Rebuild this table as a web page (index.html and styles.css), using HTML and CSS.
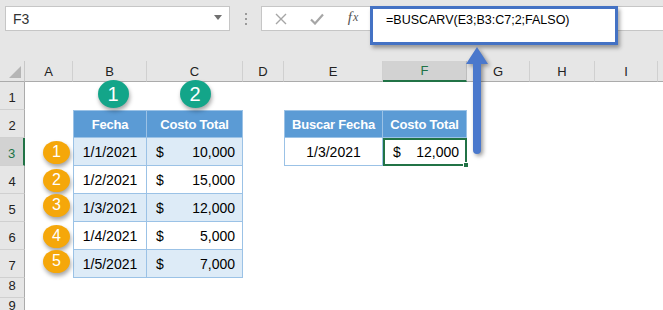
FILE: index.html
```html
<!DOCTYPE html>
<html lang="es">
<head>
<meta charset="utf-8">
<title>BUSCARV</title>
<link rel="stylesheet" href="styles.css">
</head>
<body>
<div class="app">
  <header class="toolbar">
    <div class="namebox"><span class="ref">F3</span><span class="caret"></span></div>
    <div class="grip"><i></i><i></i><i></i></div>
    <div class="fbar">
      <span class="fbtn"><svg width="12" height="12" viewBox="0 0 12 12"><path d="M1 1 L11 11 M11 1 L1 11" stroke="#a6a6a6" stroke-width="1.4" fill="none"/></svg></span>
      <span class="fbtn"><svg width="14" height="12" viewBox="0 0 14 12"><path d="M1 6.5 L5 10.5 L13 1.5" stroke="#a6a6a6" stroke-width="2.2" fill="none"/></svg></span>
      <span class="fbtn fx">f<span class="fx-x">x</span></span>
      <div class="finput"></div>
    </div>
  </header>

  <div class="sheet">
    <div class="corner"><span class="tri"></span></div>
    <div class="ch">A</div>
    <div class="ch">B</div>
    <div class="ch">C</div>
    <div class="ch">D</div>
    <div class="ch">E</div>
    <div class="ch ch-sel">F</div>
    <div class="ch">G</div>
    <div class="ch">H</div>
    <div class="ch">I</div>
    <div class="ch"></div>

    <div class="rh">1</div>
    <div></div>
    <div class="bc bc-b"><span class="badge green">1</span></div>
    <div class="bc"><span class="badge green">2</span></div>

    <div class="rh">2</div>
    <div></div>
    <div class="th th-first">Fecha</div>
    <div class="th">Costo Total</div>
    <div></div>
    <div class="th th-first">Buscar Fecha</div>
    <div class="th">Costo Total</div>

    <div class="rh rh-sel">3</div>
    <div class="bc bc-a"><span class="badge orange">1</span></div>
    <div class="td td-first band">1/1/2021</div>
    <div class="td money band"><span>$</span><span>10,000</span></div>
    <div></div>
    <div class="td td-first plain">1/3/2021</div>
    <div class="td money plain selected"><span>$</span><span>12,000</span><span class="handle"></span></div>

    <div class="rh">4</div>
    <div class="bc bc-a"><span class="badge orange">2</span></div>
    <div class="td td-first">1/2/2021</div>
    <div class="td money"><span>$</span><span>15,000</span></div>

    <div class="rh">5</div>
    <div class="bc bc-a up"><span class="badge orange">3</span></div>
    <div class="td td-first band">1/3/2021</div>
    <div class="td money band"><span>$</span><span>12,000</span></div>

    <div class="rh">6</div>
    <div class="bc bc-a"><span class="badge orange">4</span></div>
    <div class="td td-first">1/4/2021</div>
    <div class="td money"><span>$</span><span>5,000</span></div>

    <div class="rh">7</div>
    <div class="bc bc-a up"><span class="badge orange">5</span></div>
    <div class="td td-first band">1/5/2021</div>
    <div class="td money band"><span>$</span><span>7,000</span></div>

    <div class="rh">8</div>
    <div class="rh">9</div>
  </div>

  <div class="callout">=BUSCARV(E3;B3:C7;2;FALSO)</div>
  <svg class="arrow" width="34" height="122" viewBox="0 0 34 122">
    <path d="M17 7 L28 24 L21 24 L21 110 A4 4 0 0 1 13 110 L13 24 L6 24 Z" fill="#4a78cc"/>
  </svg>
</div>
</body>
</html>
```

FILE: styles.css
```css
* { box-sizing: border-box; }

html, body {
  margin: 0;
  padding: 0;
  background: #ffffff;
}

body {
  width: 663px;
  height: 310px;
  overflow: hidden;
  font-family: "Liberation Sans", Arial, sans-serif;
  color: #000;
}

.app {
  position: relative;
  width: 663px;
  height: 310px;
  overflow: hidden;
}

/* ---------- toolbar ---------- */
.toolbar {
  height: 61px;
  background: #e6e6e6;
  display: flex;
  align-items: flex-start;
  padding: 6px 0 0 5px;
}

.namebox {
  width: 225px;
  height: 25px;
  background: #fff;
  border: 1px solid #c6c6c6;
  display: flex;
  align-items: center;
  justify-content: space-between;
  padding: 0 7px 0 7px;
}

.ref {
  font-size: 14px;
  color: #333;
}

.caret {
  width: 0;
  height: 0;
  border-top: 5px solid #707070;
  border-left: 4px solid transparent;
  border-right: 4px solid transparent;
  margin-top: -2px;
}

.grip {
  width: 31px;
  height: 25px;
  display: flex;
  flex-direction: column;
  align-items: center;
  justify-content: center;
  gap: 3px;
}

.grip i {
  display: block;
  width: 2px;
  height: 2px;
  background: #9a9a9a;
}

.fbar {
  flex: 1;
  height: 25px;
  background: #fff;
  border: 1px solid #c6c6c6;
  border-right: none;
  display: flex;
  align-items: center;
}

.fbtn {
  width: 36px;
  height: 23px;
  display: flex;
  align-items: center;
  justify-content: center;
}

.fbtn:first-child { width: 37px; }

.fx {
  font-family: "Liberation Serif", "Times New Roman", serif;
  font-style: italic;
  font-size: 15px;
  color: #555;
  padding-bottom: 2px;
}

.fx-x {
  font-size: 12px;
  margin-left: 1px;
}

.finput {
  flex: 1;
  height: 23px;
  border-left: 1px solid #d8d8d8;
}

/* ---------- sheet ---------- */
.sheet {
  display: grid;
  grid-template-columns: 25px 48px 74px 96px 41px 99px 84px 63px 65px 63px 60px;
  grid-template-rows: 21px repeat(7, 28px) 20px 20px;
  font-size: 14px;
}

.corner {
  background: #e6e6e6;
  border-right: 1px solid #c8c8c8;
  border-bottom: 1px solid #ababab;
  display: flex;
  align-items: flex-end;
  justify-content: flex-end;
  padding: 0 3px 3px 0;
}

.tri {
  width: 0;
  height: 0;
  border-bottom: 12px solid #b5b5b5;
  border-left: 12px solid transparent;
}

.ch {
  background: #e6e6e6;
  border-right: 1px solid #d0d0d0;
  border-bottom: 1px solid #ababab;
  display: flex;
  align-items: center;
  justify-content: center;
  font-size: 13px;
  color: #222;
  position: relative;
  z-index: 2;
}

.ch-sel {
  background: #d2d2d2;
  color: #217346;
  border-bottom: 2px solid #217346;
  border-right-color: #bdbdbd;
}

.rh {
  grid-column: 1;
  background: #e6e6e6;
  border-right: 1px solid #ababab;
  border-bottom: 1px solid #d0d0d0;
  display: flex;
  align-items: flex-end;
  justify-content: center;
  padding-bottom: 3px;
  font-size: 13px;
  line-height: 16px;
  color: #222;
}

.rh-sel {
  background: #d2d2d2;
  color: #217346;
  border-right: 2px solid #217346;
}

/* badges */
.bc {
  display: flex;
  align-items: center;
  justify-content: center;
  position: relative;
  z-index: 3;
}

.bc-b { padding-left: 6px; }

.bc-a {
  justify-content: flex-end;
  padding-right: 3px;
}

.up { padding-bottom: 6px; }

.badge {
  display: flex;
  align-items: center;
  justify-content: center;
  color: #fff;
  border-radius: 50%;
  box-shadow: 1px 3px 4px rgba(0, 0, 0, 0.35);
}

.green {
  width: 31px;
  height: 28px;
  background: #13a589;
  font-size: 20px;
  margin-top: -4px;
}

.orange {
  width: 27px;
  height: 23px;
  background: #f5a70a;
  font-size: 16px;
}

/* table cells */
.th {
  background: #5b9bd5;
  color: #fff;
  font-weight: bold;
  font-size: 13px;
  letter-spacing: -0.2px;
  display: flex;
  align-items: center;
  justify-content: center;
  border-top: 1px solid #9bc2e6;
  border-right: 1px solid #9bc2e6;
  border-bottom: 1px solid #9bc2e6;
}

.th-first { border-left: 1px solid #9bc2e6; }

.td {
  background: #fff;
  display: flex;
  align-items: center;
  justify-content: center;
  border-right: 1px solid #9bc2e6;
  border-bottom: 1px solid #9bc2e6;
}

.td-first { border-left: 1px solid #9bc2e6; }

.band { background: #ddebf7; }
.plain { background: #fff; }

.money {
  justify-content: space-between;
  padding: 0 7px 0 9px;
}

.selected {
  position: relative;
  border: 2px solid #217346;
  padding: 0 6px 0 8px;
}

.handle {
  position: absolute;
  right: -4px;
  bottom: -4px;
  width: 6px;
  height: 6px;
  background: #217346;
  border: 1px solid #fff;
}

/* ---------- annotations ---------- */
.callout {
  position: absolute;
  left: 370px;
  top: 6px;
  width: 248px;
  height: 39px;
  background: #fff;
  border: 3px solid #4472c4;
  box-shadow: 2px 3px 4px rgba(0, 0, 0, 0.35);
  padding: 2px 0 0 13px;
  font-size: 12.5px;
  line-height: 18px;
  color: #000;
  z-index: 5;
}

.arrow {
  position: absolute;
  left: 460px;
  top: 40px;
  z-index: 6;
  filter: drop-shadow(2px 2px 2px rgba(0, 0, 0, 0.4));
}
```
